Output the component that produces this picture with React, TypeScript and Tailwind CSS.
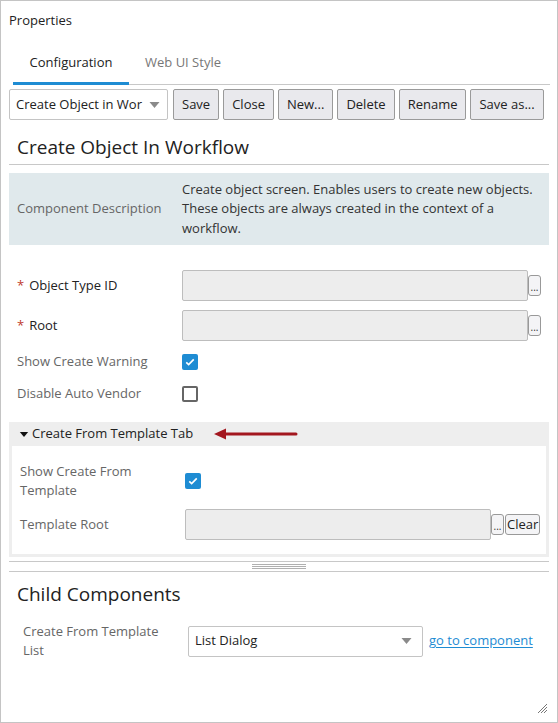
import React from "react";

const Check = ({ checked }: { checked: boolean }) =>
  checked ? (
    <span className="flex h-4 w-4 items-center justify-center rounded-[2px] bg-[#1e8cd3]">
      <svg viewBox="0 0 16 16" className="h-3 w-3" fill="none" stroke="#fff" strokeWidth="2.2">
        <path d="M3 8.5l3.2 3L13 4.5" />
      </svg>
    </span>
  ) : (
    <span className="block h-4 w-4 rounded-[2px] border-2 border-[#666] bg-white" />
  );

const Dots = () => (
  <button className="flex h-[21px] w-[13px] items-end justify-center rounded-[3px] border border-[#999] bg-[#f4f4f6] pb-[3px] text-[10px] leading-none text-[#333]">
    ...
  </button>
);

const Caret = () => (
  <svg viewBox="0 0 10 6" className="h-[6px] w-[11px]" fill="#8a8a8a">
    <path d="M0 0h10L5 6z" />
  </svg>
);

const toolButtons = ["Save", "Close", "New...", "Delete", "Rename", "Save as..."];

export default function App() {
  return (
    <div className="relative h-[723px] w-[558px] border border-[#c4c4c4] bg-white font-['Open_Sans',sans-serif] text-[13px] text-[#333]">
      <div className="pl-[8px] pt-[9px] leading-[20px] text-[#222]">Properties</div>

      {/* tabs */}
      <div className="ml-[12px] mt-[11px] mr-[7px] flex border-b border-[#c8c8c8]">
        <div className="relative flex h-[43px] w-[116px] items-center justify-center text-[#222]">
          Configuration
          <span className="absolute inset-x-0 -bottom-px h-[3px] bg-[#1e8cd3]" />
        </div>
        <div className="flex h-[43px] items-center pl-[16px] text-[#777]">Web UI Style</div>
      </div>

      <div className="ml-[8px] w-[540px]">
        {/* toolbar */}
        <div className="mt-[4px] flex items-center gap-[4px]">
          <div className="mr-[1px] flex h-[31px] w-[159px] items-center justify-between rounded-[2px] border border-[#c4c4c4] bg-white pl-[6px] pr-[7px]">
            <span className="whitespace-nowrap text-[#222]">Create Object in Wor</span>
            <Caret />
          </div>
          {toolButtons.map((b) => (
            <button
              key={b}
              className="h-[31px] rounded-[2px] border border-[#9a9a9a] bg-[#e9e9ed] px-[8px] text-[#222]"
            >
              {b}
            </button>
          ))}
        </div>

        {/* heading */}
        <div className="mt-[14px] border-b border-[#c8c8c8] pb-[4px] pl-[8px] text-[19px] leading-[26px] text-[#222]">
          Create Object In Workflow
        </div>

        {/* description */}
        <div className="mt-[8px] flex h-[72px] items-center bg-[#e0e9ec] pl-[8px]">
          <div className="w-[165px] text-[#666]">Component Description</div>
          <div className="w-[360px] leading-[19.5px] text-[#333]">
            Create object screen. Enables users to create new objects. These objects are always created in the context of a
            workflow.
          </div>
        </div>

        {/* fields */}
        <div className="mt-[25px] flex h-[31px] items-center">
          <div className="w-[173px] pl-[8px] text-[#222]">
            <span className="mr-[5px] text-[#c0392b]">*</span>Object Type ID
          </div>
          <div className="h-[31px] w-[346px] rounded-[2px] border border-[#bdbdbd] bg-[#ededed]" />
          <Dots />
        </div>
        <div className="mt-[9px] flex h-[31px] items-center">
          <div className="w-[173px] pl-[8px] text-[#222]">
            <span className="mr-[5px] text-[#c0392b]">*</span>Root
          </div>
          <div className="h-[31px] w-[346px] rounded-[2px] border border-[#bdbdbd] bg-[#ededed]" />
          <Dots />
        </div>
        <div className="mt-[5px] flex h-8 items-center">
          <div className="w-[173px] pl-[8px] text-[#666]">Show Create Warning</div>
          <Check checked />
        </div>
        <div className="flex h-8 items-center">
          <div className="w-[173px] pl-[8px] text-[#666]">Disable Auto Vendor</div>
          <Check checked={false} />
        </div>

        {/* section */}
        <div className="mt-[12px] bg-[#eeeeee] px-[3px] pb-[3px]">
          <div className="flex h-[24px] items-center pl-[7px] text-[#222]">
            <svg viewBox="0 0 10 6" className="mr-[3px] h-[5px] w-[10px]" fill="#111">
              <path d="M0 0h10L5 6z" />
            </svg>
            Create From Template Tab
            <svg viewBox="0 0 84 12" className="ml-[21px] h-[12px] w-[84px]">
              <path d="M0 6L12 0.5V11.5z" fill="#a3171f" />
              <path d="M10 6H82" stroke="#a3171f" strokeWidth="3" strokeLinecap="round" />
            </svg>
          </div>
          <div className="bg-white pb-[14px] pt-[16px]">
            <div className="flex items-center">
              <div className="w-[173px] pl-[8px] leading-[19px] text-[#666]">
                Show Create From
                <br />
                Template
              </div>
              <Check checked />
            </div>
            <div className="mt-[9px] flex h-[31px] items-center">
              <div className="w-[173px] pl-[8px] text-[#666]">Template Root</div>
              <div className="h-[31px] w-[306px] rounded-[2px] border border-[#bdbdbd] bg-[#ededed]" />
              <Dots />
              <button className="ml-px h-[21px] rounded-[3px] border border-[#999] bg-[#f4f4f6] px-px text-[13px] leading-none text-[#222]">
                Clear
              </button>
            </div>
          </div>
        </div>

        {/* splitter */}
        <div className="mt-[4px] border-t border-[#c8c8c8]">
          <div className="mx-auto mt-px flex w-[54px] flex-col gap-px py-px">
            <span className="h-px bg-[#b0b0b0]" />
            <span className="h-px bg-[#b0b0b0]" />
            <span className="h-px bg-[#b0b0b0]" />
          </div>
        </div>
        <div className="mt-px border-t border-[#c8c8c8]" />

        {/* child components */}
        <div className="mt-[9px] pl-[8px] text-[19px] leading-[26px] text-[#222]">Child Components</div>
        <div className="mt-[15px] flex items-center">
          <div className="w-[179px] pl-[14px] leading-[19px] text-[#666]">
            Create From Template
            <br />
            List
          </div>
          <div className="flex h-[31px] w-[235px] items-center justify-between rounded-[2px] border border-[#c4c4c4] bg-white pl-[6px] pr-[10px] text-[#222]">
            List Dialog
            <Caret />
          </div>
          <a className="ml-[6px] text-[#1e8cd3] underline underline-offset-2" href="#">
            go to component
          </a>
        </div>
      </div>

      {/* resize grip */}
      <svg viewBox="0 0 10 10" className="absolute bottom-[9px] right-[10px] h-[10px] w-[10px]" stroke="#777" strokeWidth="1">
        <path d="M1 10L10 1M4 10L10 4M7 10L10 7" />
      </svg>
    </div>
  );
}
